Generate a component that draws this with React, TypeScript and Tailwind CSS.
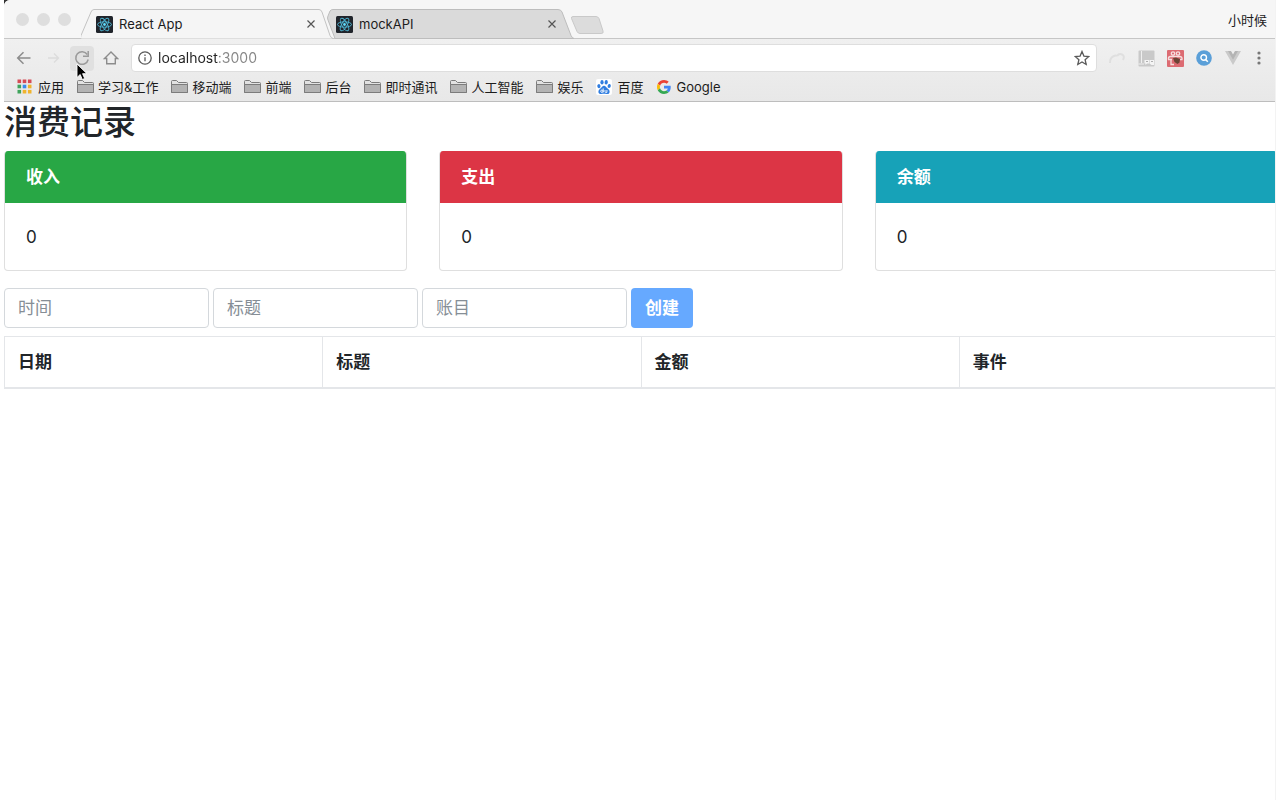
import { useState } from "react";
import type { ReactNode } from "react";

const bookmarks = ["学习&工作", "移动端", "前端", "后台", "即时通讯", "人工智能", "娱乐"];

const cards = [
  { title: "收入", amount: 0, header: "bg-[#28a745]" },
  { title: "支出", amount: 0, header: "bg-[#dc3545]" },
  { title: "余额", amount: 0, header: "bg-[#17a2b8]" },
];

const columns = ["日期", "标题", "金额", "事件"];

const ReactIcon = () => (
  <svg viewBox="0 0 17 17" className="size-[17px] shrink-0">
    <rect width="17" height="17" rx="1.5" fill="#20242b" />
    <g fill="none" stroke="#4fb9d8" strokeWidth="0.9">
      <ellipse cx="8.5" cy="8.5" rx="7" ry="2.7" />
      <ellipse cx="8.5" cy="8.5" rx="7" ry="2.7" transform="rotate(60 8.5 8.5)" />
      <ellipse cx="8.5" cy="8.5" rx="7" ry="2.7" transform="rotate(120 8.5 8.5)" />
    </g>
    <circle cx="8.5" cy="8.5" r="1.4" fill="#61dafb" />
  </svg>
);

const FolderIcon = () => (
  <svg viewBox="0 0 17 14" className="h-[14px] w-[17px] shrink-0">
    <path d="M.5 12.500V1.500Q.5 .5 1.500 .5H5.500L7.500 2.500H15.500Q16.500 2.500 16.500 3.500V12.500Z" fill="#e2e2e2" stroke="#7c7c7c" />
    <path d="M.5 4.500H16.500V12.500H.5Z" fill="#b3b3b3" stroke="#7c7c7c" />
  </svg>
);

const AppsIcon = () => {
  const colors = ["#d64b54", "#d64b54", "#d64b54", "#3fa35b", "#3b8bea", "#f0b32c", "#3fa35b", "#f0b32c", "#f0b32c"];
  return (
    <svg viewBox="0 0 15 15" className="size-[15px] shrink-0">
      {colors.map((color, i) => (
        <rect key={i} x={0.5 + (i % 3) * 5.2} y={0.5 + Math.floor(i / 3) * 5.2} width="3.6" height="3.6" fill={color} />
      ))}
    </svg>
  );
};

const BaiduIcon = () => (
  <svg viewBox="0 0 16 16" className="size-4 shrink-0">
    <rect width="16" height="16" rx="2" fill="#fff" />
    <g fill="#2f7de0">
      <ellipse cx="2.9" cy="7.2" rx="1.6" ry="2.1" transform="rotate(-12 2.9 7.2)" />
      <ellipse cx="6" cy="3.3" rx="1.6" ry="2.2" />
      <ellipse cx="10.2" cy="3.3" rx="1.6" ry="2.2" transform="rotate(8 10.2 3.3)" />
      <ellipse cx="13.2" cy="7" rx="1.6" ry="2.1" transform="rotate(12 13.2 7)" />
      <path d="M8 6.7c1.6 0 2.3 1.5 3.3 2.5 1.2 1.1 2.5 1.9 2.3 3.7-.2 1.7-1.5 2.3-3 2.1-1.8-.2-3.4-.2-5.2 0-1.5.2-2.9-.5-3-2.1-.1-1.8 1.2-2.6 2.3-3.7C5.7 8.2 6.4 6.7 8 6.7Z" />
    </g>
    <g fill="none" stroke="#fff" strokeWidth="0.9">
      <circle cx="5.9" cy="12.2" r="1.2" />
      <path d="M7.2 9.4v4M9 11v1.7q0 .7.7.7h1.2V11" />
    </g>
  </svg>
);

const GoogleIcon = () => (
  <svg viewBox="0 0 48 48" className="size-[14px] shrink-0">
    <path fill="#EA4335" d="M24 9.5c3.54 0 6.71 1.22 9.21 3.6l6.85-6.85C35.9 2.38 30.47 0 24 0 14.62 0 6.51 5.38 2.56 13.22l7.98 6.19C12.43 13.72 17.74 9.5 24 9.5z" />
    <path fill="#4285F4" d="M46.98 24.55c0-1.57-.15-3.09-.38-4.55H24v9.02h12.94c-.58 2.96-2.26 5.48-4.78 7.18l7.73 6c4.51-4.18 7.09-10.36 7.09-17.65z" />
    <path fill="#FBBC05" d="M10.53 28.59c-.48-1.45-.76-2.99-.76-4.59s.27-3.14.76-4.59l-7.98-6.19C.92 16.46 0 20.12 0 24c0 3.88.92 7.54 2.56 10.78l7.97-6.19z" />
    <path fill="#34A853" d="M24 48c6.48 0 11.93-2.13 15.89-5.81l-7.73-6c-2.15 1.45-4.92 2.3-8.16 2.3-6.26 0-11.57-4.22-13.47-9.91l-7.98 6.19C6.51 42.62 14.62 48 24 48z" />
  </svg>
);

const Tab = ({ title, active }: { title: string; active?: boolean }) => (
  <div className={`relative flex h-[30px] items-center pr-[14px] ${active ? "z-10 w-[252px] pl-[15px]" : "-ml-[6px] w-[247px] pl-[9px]"}`}>
    <svg
      viewBox={active ? "0 0 252 30" : "0 0 247 30"}
      preserveAspectRatio="none"
      className="absolute inset-0 size-full"
    >
      {active ? (
        <path d="M0 29.5Q-1 29.5 0 26.5L10 3Q11 .5 13 .5H238Q240 .5 241 3L249 26.5Q250 29 252 29.5" fill="#f5f5f5" stroke="#c3c3c3" />
      ) : (
        <path d="M8 29.5L1 11Q0 9 1 7L3 2Q4 .5 6 .5H231Q234 .5 235 3L244 26.5Q245 29 247 29.5Z" fill="#dadada" stroke="#bdbdbd" />
      )}
    </svg>
    <div className="relative flex grow items-center gap-[6px]">
      <ReactIcon />
      <span className="grow text-[13px] leading-4 text-[#1c1c1c]">{title}</span>
      <button type="button" aria-label="关闭" className="flex size-4 items-center justify-center">
        <svg viewBox="0 0 8 8" className="size-2">
          <path d="M.5.5l7 7M7.5.5l-7 7" stroke="#555" strokeWidth="1.2" />
        </svg>
      </button>
    </div>
  </div>
);

const ToolButton = ({ label, className = "w-6", children }: { label: string; className?: string; children: ReactNode }) => (
  <button type="button" aria-label={label} className={`flex h-[25px] shrink-0 items-center justify-center ${className}`}>
    {children}
  </button>
);

const TabStrip = () => (
  <div className="flex h-[39px] items-end rounded-tl-md border-b border-[#c6c6c6] bg-[#f6f6f6]">
    <div className="flex w-[77px] gap-2 self-center pl-3">
      <span className="size-[13px] rounded-full bg-[#dedede]" />
      <span className="size-[13px] rounded-full bg-[#dedede]" />
      <span className="size-[13px] rounded-full bg-[#dedede]" />
    </div>
    <div className="-mb-px flex items-end">
      <Tab title="React App" active />
      <Tab title="mockAPI" />
      <button type="button" aria-label="新标签页" className="mb-[5px] -ml-[4px]">
        <svg viewBox="0 0 35 18" className="h-[18px] w-[35px]">
          <path d="M3 .5H26Q28 .5 29 2.5L33 15Q34 17.5 31 17.5H10Q8 17.5 7 15.5L1.5 2.5Q1 .5 3 .5Z" fill="#dcdcdc" stroke="#c9c9c9" />
        </svg>
      </button>
    </div>
    <span className="mt-px ml-auto self-center pr-2 text-[13px] leading-5 text-[#1c1c1c]">小时候</span>
  </div>
);

const Toolbar = () => (
  <div className="flex items-center pt-[5px] pr-[7px] pl-2">
    <div className="flex gap-[5px]">
      <ToolButton label="后退">
        <svg viewBox="0 0 16 16" className="size-4" fill="none" stroke="#8c8c8c" strokeWidth="1.5">
          <path d="M14.5 8H2M7.5 2.2L1.7 8l5.8 5.8" />
        </svg>
      </ToolButton>
      <ToolButton label="前进">
        <svg viewBox="0 0 16 16" className="size-4" fill="none" stroke="#dcdcdc" strokeWidth="1.3">
          <path d="M3 8h10M9 3.5L13.5 8 9 12.5" />
        </svg>
      </ToolButton>
      <ToolButton label="刷新" className="w-6 rounded-sm bg-[#e0e0e0]">
        <svg viewBox="0 0 16 16" className="size-4" fill="none" stroke="#9a9a9a" strokeWidth="1.5">
          <path d="M13.3 4.5A6.3 6.3 0 1 0 14.2 9.5" />
          <path d="M14.2 1v5.3H9" />
        </svg>
      </ToolButton>
      <ToolButton label="主页">
        <svg viewBox="0 0 16 16" className="size-4" fill="none" stroke="#8c8c8c" strokeWidth="1.4">
          <path d="M1.5 8.5L8 2l6.5 6.5H12.3v5.3H3.7V8.5Z" />
        </svg>
      </ToolButton>
    </div>

    <div className="ml-2 flex h-7 grow items-center rounded-sm border border-[#dedede] bg-white px-[6px]">
      <svg viewBox="0 0 14 14" className="size-[14px] shrink-0" fill="none" stroke="#5a5a5a" strokeWidth="1.3">
        <circle cx="7" cy="7" r="6.2" />
        <path d="M7 6.2v4M7 3.5v1.4" />
      </svg>
      <input
        type="text"
        aria-label="地址"
        defaultValue="localhost:3000"
        className="ml-[6px] grow bg-[linear-gradient(90deg,#222_60px,#858585_60px)] bg-clip-text text-sm text-transparent outline-none"
      />
      <svg viewBox="0 0 16 16" className="size-4 shrink-0" fill="none" stroke="#5a5a5a" strokeWidth="1.3">
        <path d="M8 1.5l1.9 4.6 4.9.4-3.7 3.2 1.1 4.8L8 11.9l-4.2 2.6 1.1-4.8L1.2 6.5l4.9-.4Z" />
      </svg>
    </div>

    <div className="ml-2 flex gap-[5px]">
      <ToolButton label="手势">
        <svg viewBox="0 0 16 16" className="size-4" fill="none" stroke="#dfdfdf" strokeWidth="2">
          <path d="M1 13Q1 8 4 6.5T8 6M8 6Q10 3 13 4.5T14 10" />
        </svg>
      </ToolButton>
      <ToolButton label="收藏">
        <svg viewBox="0 0 17 17" className="size-[17px]">
          <rect x=".5" y=".5" width="16" height="16" rx="1" fill="#c9c9c9" />
          <path d="M3.5 1v12M.5 14H6" stroke="#efefef" />
          <path d="M6.5 10h4.5v3.5H9L7.5 15v-1.5h-1ZM11.5 10H16v5h-2.5l-2-1.5Z" fill="#f4f4f4" />
          <path d="M8 11.5h2M13 11.5h2" stroke="#b0b0b0" />
        </svg>
      </ToolButton>
      <ToolButton label="插件">
        <svg viewBox="0 0 17 17" className="size-[17px]">
          <rect width="17" height="17" rx="1" fill="#dc6b72" />
          <g fill="none" stroke="#f6dede" strokeWidth="1.3">
            <circle cx="6" cy="3.5" r="1.7" />
            <circle cx="11" cy="3.5" r="1.7" />
            <path d="M3 6.5H12.500Q15.500 6.500 15 9.500H13M3 6.500Q1 7 1.500 9.500H5M4 10v4.500h3" />
          </g>
          <path d="M6 8l3-.5 4 1.500-.5 3.500-2 1.500-3-2Z" fill="#6b4436" />
        </svg>
      </ToolButton>
      <ToolButton label="搜索">
        <svg viewBox="0 0 16 16" className="size-4">
          <circle cx="8" cy="8" r="7.8" fill="#5a9fd8" />
          <path d="M9.8 9.8l2 2" stroke="#fff" strokeWidth="1.6" />
          <circle cx="7.7" cy="7.5" r="2.8" fill="none" stroke="#fff" strokeWidth="1.4" />
        </svg>
      </ToolButton>
      <ToolButton label="Vue">
        <svg viewBox="0 0 16 14" className="h-[14px] w-4">
          <path d="M0 0h5.5L8 4.5 10.5 0H16L8 14Z" fill="#cacaca" />
          <path d="M3 0h3l2 3.5L10 0h3L8 8.7Z" fill="#b4b4b4" />
        </svg>
      </ToolButton>
      <ToolButton label="菜单" className="w-[18px]">
        <svg viewBox="0 0 4 14" className="h-[14px] w-1" fill="#777">
          <circle cx="2" cy="2" r="1.6" />
          <circle cx="2" cy="7" r="1.6" />
          <circle cx="2" cy="12" r="1.6" />
        </svg>
      </ToolButton>
    </div>
  </div>
);

const BookmarkBar = () => (
  <nav className="flex h-[29px] items-center gap-[13px] pl-[13px] text-[13px] leading-5 whitespace-nowrap text-[#1c1c1c]">
    <a href="#apps" className="flex items-center gap-[6px]">
      <AppsIcon />
      应用
    </a>
    {bookmarks.map((name) => (
      <a key={name} href="#folder" className="flex items-center gap-1">
        <FolderIcon />
        {name}
      </a>
    ))}
    <a href="#baidu" className="flex items-center gap-[5px]">
      <BaiduIcon />
      百度
    </a>
    <a href="#google" className="flex items-center gap-[6px]">
      <GoogleIcon />
      Google
    </a>
  </nav>
);

const RecordForm = () => {
  const [record, setRecord] = useState({ date: "", title: "", amount: "" });
  const valid = record.date && record.title && record.amount;

  const fields = [
    { name: "date", label: "时间" },
    { name: "title", label: "标题" },
    { name: "amount", label: "账目" },
  ] as const;

  return (
    <form className="mt-[17px] flex gap-1" onSubmit={(e) => e.preventDefault()}>
      {fields.map((field) => (
        <input
          key={field.name}
          type="text"
          aria-label={field.label}
          placeholder={field.label}
          value={record[field.name]}
          onChange={(e) => setRecord({ ...record, [field.name]: e.target.value })}
          className="h-10 w-[205px] rounded border border-[#d4d8dc] px-[13px] text-[17px] placeholder:text-[#868e96]"
        />
      ))}
      <button
        type="submit"
        disabled={!valid}
        className="h-10 rounded bg-[#007bff] px-[14px] text-[17px] font-semibold text-white disabled:bg-[#66a9ff]"
      >
        创建
      </button>
    </form>
  );
};

const Records = () => (
  <main className="-mr-[3px] text-[17px] leading-[26px] text-[#212529]">
    <h1 className="text-[33px] leading-10 font-medium">消费记录</h1>
    <div className="mt-[9px] grid grid-cols-3 gap-8">
      {cards.map((card) => (
        <section key={card.title} className="overflow-hidden rounded border border-t-0 border-[#dfdfdf]">
          <h2 className={`px-[21px] py-[13px] font-semibold text-white ${card.header}`}>{card.title}</h2>
          <p className="px-[21px] pt-[21px] pb-5">{card.amount}</p>
        </section>
      ))}
    </div>
    <RecordForm />
    <table className="mt-2 w-full table-fixed border-collapse border border-[#e4e6e9]">
      <thead>
        <tr>
          {columns.map((column) => (
            <th key={column} className="border border-b-2 border-[#e4e6e9] px-[13px] py-3 text-left font-bold">
              {column}
            </th>
          ))}
        </tr>
      </thead>
      <tbody />
    </table>
  </main>
);

const App = () => (
  <div className="min-h-screen bg-white px-1 font-['Inter','Noto_Sans_CJK_SC',sans-serif]">
    <div className="relative min-h-screen overflow-hidden border-r border-[#f3f3f3]">
      <div className="bg-[#333]">
        <header className="rounded-tl-md border-b border-[#bdbdbd] bg-linear-to-b from-[#f5f5f5] to-[#e8e8e8]">
          <TabStrip />
          <Toolbar />
          <BookmarkBar />
        </header>
      </div>
      <Records />
      <svg viewBox="0 0 12 18" className="absolute top-[63px] left-[72px] h-[18px] w-3">
        <path d="M1 1v13.5l3.2-3 2.1 5 2.4-1-2.1-4.8H11Z" fill="#000" stroke="#fff" strokeWidth="0.9" />
      </svg>
    </div>
  </div>
);

export default App;
